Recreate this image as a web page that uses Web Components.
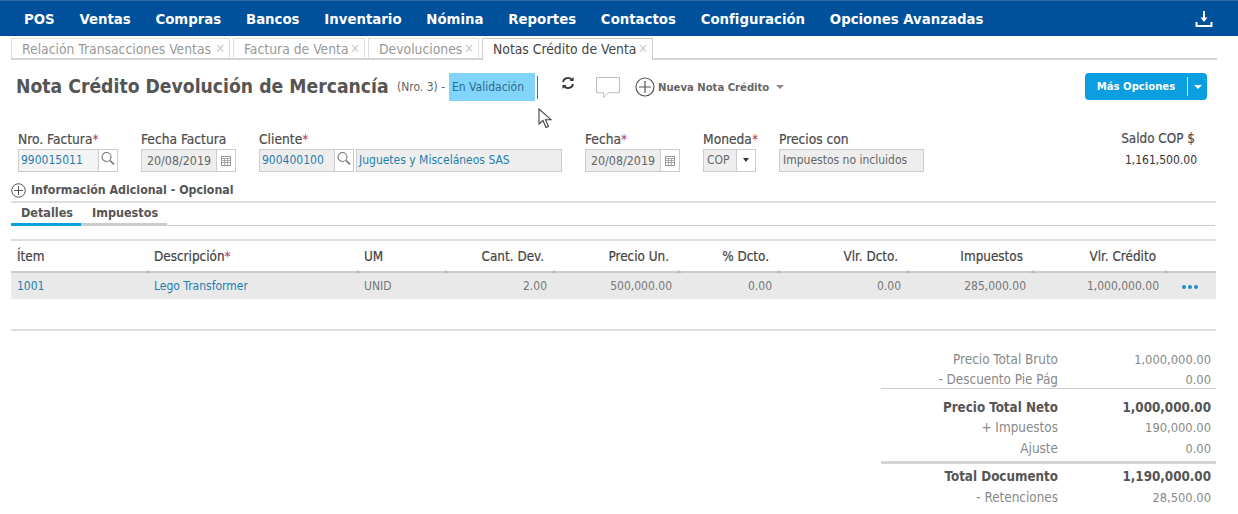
<!DOCTYPE html>
<html lang="es">
<head>
<meta charset="utf-8">
<title>Nota Crédito</title>
<style>
  html, body { margin: 0; background: #fff; }
  body { font-family: "DejaVu Sans Condensed", "DejaVu Sans", sans-serif; font-stretch: condensed; font-size: 12px; color: #555; width: 1238px; height: 514px; overflow: hidden; position: relative; }
</style>
</head>
<body>
<erp-nav>
  <a>POS</a><a>Ventas</a><a>Compras</a><a>Bancos</a><a>Inventario</a><a>Nómina</a><a>Reportes</a><a>Contactos</a><a>Configuración</a><a>Opciones Avanzadas</a>
</erp-nav>
<erp-tabs></erp-tabs>
<erp-title></erp-title>
<erp-form>
  <erp-field label="Nro. Factura" required><erp-input value="990015011" link addon="search" w="100"></erp-input></erp-field>
  <erp-field label="Fecha Factura"><erp-input value="20/08/2019" center filled addon="calendar" w="95"></erp-input></erp-field>
  <erp-field label="Cliente" required>
    <erp-input value="900400100" link filled addon="search" w="95"></erp-input>
    <erp-input value="Juguetes y Misceláneos SAS" link filled w="206"></erp-input>
  </erp-field>
  <erp-field label="Fecha" required><erp-input value="20/08/2019" center filled addon="calendar" w="95"></erp-input></erp-field>
  <erp-field label="Moneda" required><erp-input value="COP" filled addon="caret" w="53"></erp-input></erp-field>
  <erp-field label="Precios con"><erp-input value="Impuestos no incluidos" filled w="145"></erp-input></erp-field>
  <erp-saldo label="Saldo COP $" value="1,161,500.00"></erp-saldo>
</erp-form>
<erp-extra>Información Adicional - Opcional</erp-extra>
<erp-subtabs></erp-subtabs>
<erp-grid></erp-grid>
<erp-totals>
  <total-row label="Precio Total Bruto" value="1,000,000.00" h="20"></total-row>
  <total-row label="- Descuento Pie Pág" value="0.00" h="18"></total-row>
  <total-line></total-line>
  <total-row label="Precio Total Neto" value="1,000,000.00" strong h="20"></total-row>
  <total-row label="+ Impuestos" value="190,000.00" h="21"></total-row>
  <total-row label="Ajuste" value="0.00" h="20"></total-row>
  <total-line double></total-line>
  <total-row label="Total Documento" value="1,190,000.00" strong h="21"></total-row>
  <total-row label="- Retenciones" value="28,500.00" h="21"></total-row>
</erp-totals>
<erp-cursor></erp-cursor>

<script>
const ICONS = {
  search: `<svg width="16" height="16" viewBox="0 0 16 16" fill="none" stroke="#777" style="margin-top:-3px"><circle cx="6.500" cy="6" r="4.500" stroke-width="1.100"/><path d="M10 9.500l4 4" stroke-width="1.700"/></svg>`,
  calendar: `<svg width="12" height="12" viewBox="0 0 12 12" fill="none" stroke="#999"><rect x="1.500" y="1.500" width="9" height="9"/><path d="M1.500 3.500h9M1.500 5.500h9M1.500 7.500h9M4.500 3.500v7M7.500 3.500v7" stroke-width=".8"/></svg>`,
  caret: `<svg width="8" height="5" viewBox="0 0 8 5"><path d="M1 0h6L4 4z" fill="#333"/></svg>`,
  plus: (s, c) => `<svg width="${s}" height="${s}" viewBox="0 0 20 20" fill="none" stroke="${c}"><circle cx="10" cy="10" r="9" stroke-width="1.200"/><path d="M10 4v12M4 10h12" stroke-width="1.200"/></svg>`
};

class ErpNav extends HTMLElement {
  constructor() { super(); this.attachShadow({mode: "open"}); }
  connectedCallback() {
    this.shadowRoot.innerHTML = `
    <style>
      :host { display: flex; align-items: center; height: 35px; padding-left: 24px; padding-right: 25px; gap: 24.75px; background: #00509b; border-top: 1px solid #2a6aa5; color: #fff; font-weight: 700; font-size: 14.8px; }
      ::slotted(a) { color: #fff; }
      .dl { margin-left: auto; display: flex; }
    </style>
    <slot></slot>
    <span class="dl"><svg width="18" height="18" viewBox="0 0 18 18" fill="none" stroke="#fff" stroke-width="2"><path d="M9 1v9"/><path d="M5.500 7.500h7L9 12z" fill="#fff" stroke="none"/><path d="M1.500 12v4h15v-4"/></svg></span>`;
  }
}

class ErpTabs extends HTMLElement {
  constructor() { super(); this.attachShadow({mode: "open"}); }
  connectedCallback() {
    const tabs = [["Relación Transacciones Ventas", 219], ["Factura de Venta", 132], ["Devoluciones", 111], ["Notas Crédito de Venta", 171, true]];
    this.shadowRoot.innerHTML = `
    <style>
      :host { display: flex; gap: 3px; margin: 2px 21px 0 11px; height: 20px; border-bottom: 2px solid #d4d4d4; align-items: flex-end; }
      .tab { box-sizing: border-box; height: 20px; display: flex; align-items: center; justify-content: space-between; padding: 0 4px 0 10px; border: 1px solid #ddd; border-bottom: 0; color: #999; font-size: 13.8px; }
      .tab.on { height: 22px; margin-bottom: -2px; background: #fff; color: #444; border-color: #ccc; padding-bottom: 2px; }
      i { font-style: normal; color: #ccc; font-size: 13px; }
    </style>
    ${tabs.map(t => `<div class="tab ${t[2] ? "on" : ""}" style="width:${t[1]}px"><span>${t[0]}</span><i>✕</i></div>`).join("")}`;
  }
}

class ErpTitle extends HTMLElement {
  constructor() { super(); this.attachShadow({mode: "open"}); }
  connectedCallback() {
    this.shadowRoot.innerHTML = `
    <style>
      :host { display: flex; align-items: center; height: 28px; padding: 13px 31px 30px 16px; }
      h1 { margin: 0 0 2px; font-size: 19.2px; font-weight: 700; color: #555; white-space: nowrap; width: 381px; }
      .nro { font-size: 12px; color: #666; width: 52px; white-space: nowrap; }
      .status { box-sizing: border-box; width: 86px; height: 28px; background: #81d4fa; color: #2a6e8e; display: flex; align-items: center; padding-left: 3px; font-size: 12px; }
      .bar { width: 1px; height: 23px; margin-left: 2px; background: #666; }
      .refresh { margin-left: 23px; margin-top: -8px; display: flex; }
      .bubble { margin-left: 21px; margin-top: 1px; display: flex; }
      .plus { margin-left: 15px; display: flex; }
      .nueva { margin-left: 3px; font-size: 11.2px; font-weight: 700; color: #666; white-space: nowrap; }
      .caret { margin-left: 7px; width: 0; height: 0; border: 4px solid transparent; border-top-color: #888; border-bottom: 0; }
      .more { margin-left: auto; margin-top: -1px; box-sizing: border-box; width: 122px; height: 27px; background: #0b9ee0; border-radius: 4px; color: #fff; font-weight: 700; font-size: 11.2px; display: flex; align-items: center; }
      .more span:first-child { width: 102px; text-align: center; }
      .more b { width: 1px; height: 19px; background: #cdeaf8; }
      .more u { margin-left: 6px; width: 0; height: 0; border: 4px solid transparent; border-top-color: #fff; border-bottom: 0; }
    </style>
    <h1>Nota Crédito Devolución de Mercancía</h1>
    <span class="nro">(Nro. 3) -</span>
    <span class="status">En Validación</span>
    <span class="bar"></span>
    <span class="refresh"><svg width="14" height="14" viewBox="0 0 14 14" fill="none" stroke="#333" stroke-width="1.800"><path d="M2 6a5 5 0 0 1 9-2"/><path d="M12 8a5 5 0 0 1-9 2"/><path d="M12.500 1v4h-4z" fill="#333" stroke="none"/><path d="M1.500 13V9h4z" fill="#333" stroke="none"/></svg></span>
    <span class="bubble"><svg width="24" height="21" viewBox="0 0 25 22" fill="#fff" stroke="#bbb"><path d="M.5.5h24v16H13l-5 5v-5H.5z"/></svg></span>
    <span class="plus">${ICONS.plus(20, "#555")}</span>
    <span class="nueva">Nueva Nota Crédito</span>
    <span class="caret"></span>
    <span class="more"><span>Más Opciones</span><b></b><u></u></span>`;
  }
}

class ErpForm extends HTMLElement {
  constructor() { super(); this.attachShadow({mode: "open"}); }
  connectedCallback() {
    this.shadowRoot.innerHTML = `
    <style>:host { display: flex; gap: 23px; padding: 0 41px 0 18px; height: 47px; }</style>
    <slot></slot>`;
  }
}

class ErpField extends HTMLElement {
  constructor() { super(); this.attachShadow({mode: "open"}); }
  connectedCallback() {
    this.shadowRoot.innerHTML = `
    <style>
      :host { display: block; }
      label { display: block; width: 0; height: 18px; line-height: 16px; font-size: 13.7px; color: #4d4d4d; -webkit-text-stroke: .2px #4d4d4d; white-space: nowrap; }
      label i { color: #b03060; font-style: normal; -webkit-text-stroke: 0; }
      div { display: flex; gap: 2px; }
    </style>
    <label>${this.getAttribute("label")}${this.hasAttribute("required") ? "<i>*</i>" : ""}</label>
    <div><slot></slot></div>`;
  }
}

class ErpInput extends HTMLElement {
  constructor() { super(); this.attachShadow({mode: "open"}); }
  connectedCallback() {
    const addon = this.getAttribute("addon");
    const link = this.hasAttribute("link");
    const center = this.hasAttribute("center");
    const bg = this.hasAttribute("filled") ? "#eee" : "#f4f4f4";
    this.shadowRoot.innerHTML = `
    <style>
      :host { display: flex; box-sizing: border-box; width: ${this.getAttribute("w")}px; height: 23px; border: 1px solid #ccc; font-size: ${center ? 12.4 : 12}px; color: ${link ? "#1f7fb0" : "#666"}; }
      .v { flex: 1; background: ${bg}; line-height: 21px; padding: 0 ${link ? 2 : 3}px; text-align: ${center ? "center" : "left"}; white-space: nowrap; overflow: hidden; }
      .a { width: 18px; flex: none; border-left: 1px solid #ccc; display: flex; align-items: center; justify-content: center; background: #fff; }
    </style>
    <span class="v">${this.getAttribute("value")}</span>
    ${addon ? `<span class="a">${ICONS[addon]}</span>` : ""}`;
  }
}

class ErpSaldo extends HTMLElement {
  constructor() { super(); this.attachShadow({mode: "open"}); }
  connectedCallback() {
    this.shadowRoot.innerHTML = `
    <style>
      :host { display: block; margin-left: auto; text-align: right; white-space: nowrap; }
      div { height: 18px; line-height: 16px; font-size: 13.4px; color: #4d4d4d; -webkit-text-stroke: .2px #4d4d4d; padding-right: 2px; }
      span { display: block; line-height: 23px; font-size: 12px; color: #333; }
    </style>
    <div>${this.getAttribute("label")}</div><span>${this.getAttribute("value")}</span>`;
  }
}

class ErpExtra extends HTMLElement {
  constructor() { super(); this.attachShadow({mode: "open"}); }
  connectedCallback() {
    this.shadowRoot.innerHTML = `
    <style>
      :host { display: flex; align-items: center; gap: 5px; box-sizing: border-box; height: 25px; margin: 0 22px 0 11px; padding-top: 1px; border-bottom: 2px solid #ddd; font-size: 12.3px; font-weight: 700; color: #555; }
    </style>
    ${ICONS.plus(15, "#444")}<slot></slot>`;
  }
}

class ErpSubtabs extends HTMLElement {
  constructor() { super(); this.attachShadow({mode: "open"}); }
  connectedCallback() {
    this.shadowRoot.innerHTML = `
    <style>
      :host { display: flex; height: 19px; margin: 3px 23px 0 11px; border-bottom: 1px solid #ccc; font-size: 12.5px; font-weight: 700; color: #555; }
      div { box-sizing: border-box; height: 20px; padding: 0 10px; line-height: 14px; border-bottom: 3px solid #ccc; }
      .on { width: 70px; border-bottom-color: #0b9ee0; }
      .off { width: 86px; padding-left: 11px; }
    </style>
    <div class="on">Detalles</div><div class="off">Impuestos</div>`;
  }
}

class ErpGrid extends HTMLElement {
  constructor() { super(); this.attachShadow({mode: "open"}); }
  connectedCallback() {
    const head = ["Ítem", "Descripción<i>*</i>", "UM", "Cant. Dev.", "Precio Un.", "% Dcto.", "Vlr. Dcto.", "Impuestos", "Vlr. Crédito"];
    const row = ["1001", "Lego Transformer", "UNID", "2.00", "500,000.00", "0.00", "0.00", "285,000.00", "1,000,000.00"];
    const cls = i => i < 3 ? "l" : "r";
    this.shadowRoot.innerHTML = `
    <style>
      :host { display: block; margin: 13px 22px 0 11px; border-top: 2px solid #ddd; padding-bottom: 30px; font-size: 12px; }
      .h, .d { display: grid; grid-template-columns: 136px 210px 88px 108px 125px 100px 129px 125px 133px 50px; }
      .c { white-space: nowrap; }
      .h { height: 30px; line-height: 32px; border-bottom: 2px solid #ccc; color: #444; -webkit-text-stroke: .2px #444; font-size: 13.4px; }
      .d { height: 26px; line-height: 27px; background: #e9e9e9; color: #777; }
      .h .c { position: relative; }
      .h .c::after { content: ""; position: absolute; right: -4px; bottom: 0; border: 3px solid transparent; border-bottom-color: #bbb; border-top: 0; }
      .h .l { padding-left: 7px; } .h .r { padding-right: 9px; text-align: right; }
      .d .l { padding-left: 7px; } .d .r { padding-right: 6px; text-align: right; }
      .h .c:first-child, .d .c:first-child { padding-left: 6px; }
      .d .c:nth-child(-n+2) { color: #1f7fb0; }
      i { color: #b03060; font-style: normal; -webkit-text-stroke: 0; }
      .dots { display: flex; align-items: center; gap: 2px; padding-left: 17px; }
      .dots b { width: 4px; height: 4px; border-radius: 50%; background: #1f8fc0; }
    </style>
    <div class="h">${head.map((t, i) => `<span class="c ${cls(i)}">${t}</span>`).join("")}</div>
    <div class="d">${row.map((t, i) => `<span class="c ${cls(i)}">${t}</span>`).join("")}<span class="dots"><b></b><b></b><b></b></span></div>`;
  }
}

class ErpTotals extends HTMLElement {
  constructor() { super(); this.attachShadow({mode: "open"}); }
  connectedCallback() {
    this.shadowRoot.innerHTML = `
    <style>
      :host { display: block; margin: 0 22px 0 11px; padding-top: 19px; border-top: 2px solid #ddd; }
      div { width: 335px; margin-left: auto; }
    </style>
    <div><slot></slot></div>`;
  }
}

class TotalRow extends HTMLElement {
  constructor() { super(); this.attachShadow({mode: "open"}); }
  connectedCallback() {
    const strong = this.hasAttribute("strong");
    this.shadowRoot.innerHTML = `
    <style>
      :host { display: flex; height: ${this.getAttribute("h")}px; line-height: 20px; font-weight: ${strong ? 700 : 400}; color: ${strong ? "#555" : "#888"}; white-space: nowrap; }
      .l { width: 177px; text-align: right; font-size: ${strong ? 13.3 : 13.4}px; }
      .v { width: 153px; text-align: right; font-size: ${strong ? 13.3 : 12.8}px; }
    </style>
    <span class="l">${this.getAttribute("label")}</span><span class="v">${this.getAttribute("value")}</span>`;
  }
}

class TotalLine extends HTMLElement {
  constructor() { super(); this.attachShadow({mode: "open"}); }
  connectedCallback() {
    const dbl = this.hasAttribute("double");
    this.shadowRoot.innerHTML = `
    <style>
      :host { display: block; height: ${dbl ? 3 : 1}px; margin: ${dbl ? "2px 0 3px" : "0 0 9px"}; background: ${dbl ? "#d4d4d4" : "#ccc"}; }
    </style>`;
  }
}

class ErpCursor extends HTMLElement {
  constructor() { super(); this.attachShadow({mode: "open"}); }
  connectedCallback() {
    this.shadowRoot.innerHTML = `
    <style>:host { position: absolute; left: 538px; top: 108px; display: block; }</style>
    <svg width="15" height="21" viewBox="0 0 15 21" fill="#fff" stroke="#444" stroke-width="1.100"><path d="M1 1v15l4-3.500 3 7 2.500-1-3-6.800h5.500z"/></svg>`;
  }
}

customElements.define("erp-nav", ErpNav);
customElements.define("erp-tabs", ErpTabs);
customElements.define("erp-title", ErpTitle);
customElements.define("erp-form", ErpForm);
customElements.define("erp-field", ErpField);
customElements.define("erp-input", ErpInput);
customElements.define("erp-saldo", ErpSaldo);
customElements.define("erp-extra", ErpExtra);
customElements.define("erp-subtabs", ErpSubtabs);
customElements.define("erp-grid", ErpGrid);
customElements.define("erp-totals", ErpTotals);
customElements.define("total-row", TotalRow);
customElements.define("total-line", TotalLine);
customElements.define("erp-cursor", ErpCursor);
</script>
</body>
</html>
